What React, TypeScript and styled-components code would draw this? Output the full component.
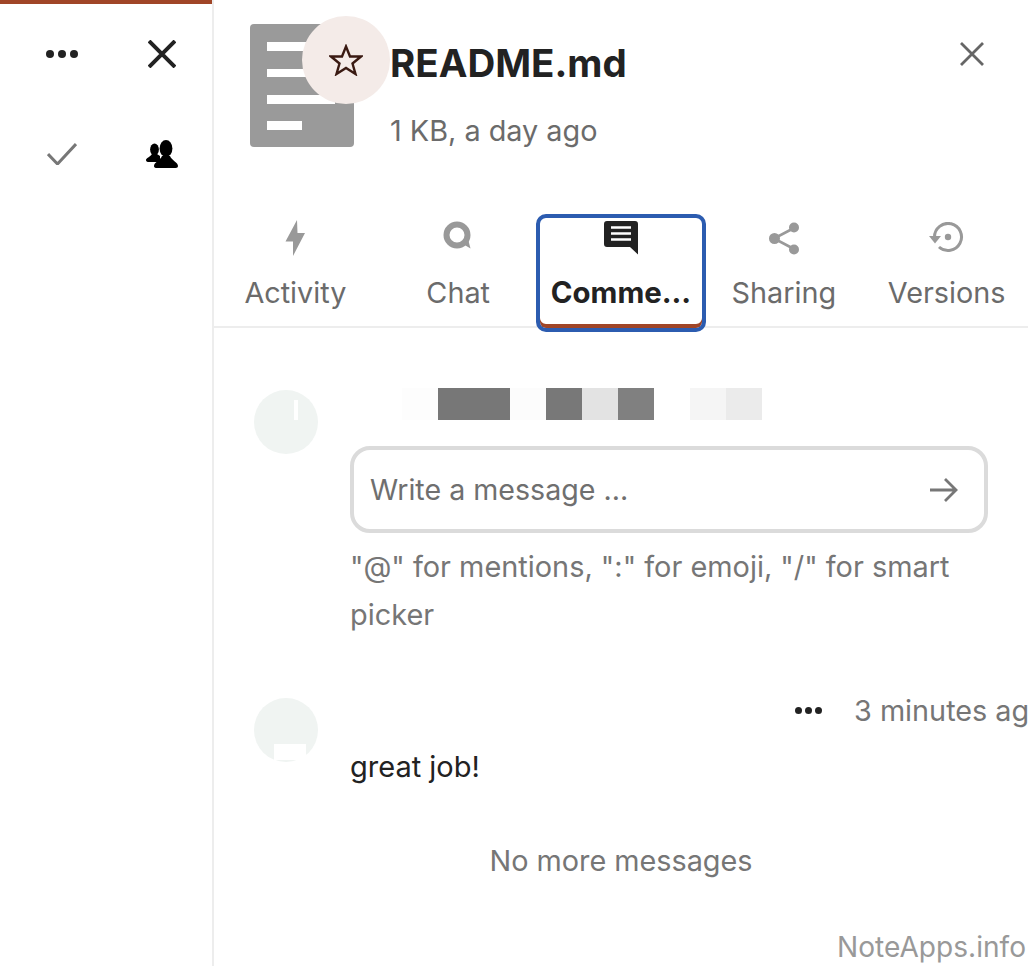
import React from "react";
import styled, { createGlobalStyle } from "styled-components";

const GlobalStyle = createGlobalStyle`
  html, body {
    margin: 0;
    padding: 0;
    background: #fff;
  }
  body {
    font-family: Inter, "Liberation Sans", sans-serif;
    color: #222;
  }
`;

const Page = styled.div`
  position: relative;
  display: flex;
  width: 1028px;
  height: 966px;
  overflow: hidden;
`;

const Sidebar = styled.aside`
  flex: 0 0 212px;
  border-right: 2px solid #ededed;
`;

const TopBar = styled.div`
  height: 4px;
  background: #a04527;
`;

const IconGrid = styled.div`
  display: grid;
  grid-template-columns: 100px 100px;
  grid-auto-rows: 100px;
  padding-left: 12px;
`;

const IconCell = styled.div`
  display: flex;
  align-items: center;
  justify-content: center;
`;

const Main = styled.main`
  flex: 1;
  min-width: 0;
`;

const Header = styled.header`
  position: relative;
  display: flex;
  height: 214px;
  box-sizing: border-box;
  padding: 24px 0 0 36px;
`;

const Thumb = styled.svg`
  display: block;
  flex: 0 0 104px;
  width: 104px;
  height: 123px;
`;

const StarBadge = styled.div`
  position: absolute;
  left: 88px;
  top: 16px;
  width: 88px;
  height: 88px;
  display: flex;
  align-items: center;
  justify-content: center;
  border-radius: 50%;
  background: #f4ebe8;
`;

const HeaderText = styled.div`
  margin-left: 36px;
`;

const Title = styled.h1`
  margin: 14px 0 0;
  font-size: 38.5px;
  line-height: 50px;
  font-weight: 700;
  color: #222;
`;

const Subtitle = styled.p`
  margin: 25px 0 0;
  font-size: 28.8px;
  line-height: 36px;
  color: #6b6b6b;
`;

const CloseButton = styled.div`
  position: absolute;
  right: 44px;
  top: 42px;
  display: flex;
`;

const Tabs = styled.nav`
  display: grid;
  grid-template-columns: repeat(5, 1fr);
  height: 112px;
  border-bottom: 2px solid #ededed;
`;

const Tab = styled.div<{ $active?: boolean }>`
  position: relative;
  display: flex;
  flex-direction: column;
  align-items: center;
  min-width: 0;
  font-size: ${(p) => (p.$active ? 29.4 : 28.8)}px;
  line-height: 36px;
  font-weight: ${(p) => (p.$active ? 700 : 400)};
  color: ${(p) => (p.$active ? "#222" : "#6b6b6b")};

  ${(p) =>
    p.$active &&
    `
    &::after {
      content: "";
      position: absolute;
      left: -4px;
      right: -4px;
      top: 0;
      bottom: -6px;
      border: 4px solid #2c5cb0;
      border-radius: 10px;
      box-shadow: inset 0 -4px 0 #a04527;
    }
  `}
`;

const TabIcon = styled.div`
  display: flex;
  align-items: center;
  justify-content: center;
  height: 48px;
`;

const TabLabel = styled.span`
  margin-top: 13px;
  white-space: nowrap;
`;

const Comments = styled.section`
  padding: 60px 40px 0;
`;

const CommentRow = styled.div<{ $gap?: number }>`
  display: flex;
  gap: 32px;
  margin-top: ${(p) => p.$gap ?? 0}px;
`;

const Avatar = styled.div`
  position: relative;
  flex: 0 0 64px;
  width: 64px;
  height: 64px;
  margin-top: 2px;
  border-radius: 50%;
  background: #f0f4f2;
`;

const AvatarMark = styled.span<{ $variant: "tick" | "block" }>`
  position: absolute;
  background: #fff;
  ${(p) =>
    p.$variant === "tick"
      ? "left: 40px; top: 10px; width: 4px; height: 20px;"
      : "left: 20px; top: 46px; width: 32px; height: 16px;"}
`;

const CommentBody = styled.div`
  flex: 1;
  min-width: 0;
`;

const NameStrip = styled.div`
  display: flex;
  height: 32px;
  padding-left: 52px;
`;

const Pixel = styled.span<{ $shade: string }>`
  width: 36px;
  background: ${(p) => p.$shade};
`;

const MessageBox = styled.div`
  display: flex;
  align-items: center;
  justify-content: space-between;
  box-sizing: border-box;
  width: 638px;
  height: 87px;
  margin-top: 26px;
  padding: 0 26px 0 16px;
  border: 4px solid #dbdbdb;
  border-radius: 20px;
  font-size: 28.6px;
  color: #6f6f6f;
`;

const Hint = styled.p`
  margin: 10px 0 0;
  width: 638px;
  font-size: 28.9px;
  line-height: 48px;
  color: #767676;
`;

const MetaRow = styled.div`
  display: flex;
  align-items: center;
  height: 28px;
  padding-left: 445px;
  white-space: nowrap;
  font-size: 28.8px;
  color: #767676;

  & svg {
    flex: none;
  }
`;

const MetaTime = styled.span`
  margin-left: 32px;
`;

const Message = styled.p`
  margin: 23px 0 0;
  font-size: 29px;
  line-height: 40px;
  color: #222;
`;

const NoMore = styled.p`
  margin: 54px 0 0;
  text-align: center;
  font-size: 28.8px;
  line-height: 40px;
  color: #767676;
`;

const Watermark = styled.div`
  position: absolute;
  right: 2px;
  bottom: 1px;
  font-size: 28.1px;
  line-height: 36px;
  color: #999;
`;

const Dots = ({ r = 4, gap = 12, fill = "#222" }: { r?: number; gap?: number; fill?: string }) => (
  <svg width={gap * 2 + r * 2} height={r * 2} viewBox={`0 0 ${gap * 2 + r * 2} ${r * 2}`}>
    <circle cx={r} cy={r} r={r} fill={fill} />
    <circle cx={r + gap} cy={r} r={r} fill={fill} />
    <circle cx={r + gap * 2} cy={r} r={r} fill={fill} />
  </svg>
);

const Cross = ({ size, stroke, color }: { size: number; stroke: number; color: string }) => (
  <svg width={size} height={size} viewBox={`0 0 ${size} ${size}`}>
    <path d={`M1 1L${size - 1} ${size - 1}M${size - 1} 1L1 ${size - 1}`} stroke={color} strokeWidth={stroke} fill="none" />
  </svg>
);

const tabs = [
  {
    label: "Activity",
    icon: (
      <svg width="20" height="36" viewBox="0 0 20 36">
        <path d="M12 0L0.5 21.5H8L8 36L20 13H12.5Z" fill="#999" />
      </svg>
    ),
  },
  {
    label: "Chat",
    icon: (
      <svg width="30" height="30" viewBox="0 0 30 30" style={{ marginTop: -4 }}>
        <circle cx="14" cy="14" r="10.5" fill="none" stroke="#999" strokeWidth="6" />
        <path d="M20 23L27.5 27.5L25 18Z" fill="#999" />
      </svg>
    ),
  },
  {
    label: "Comme...",
    active: true,
    icon: (
      <svg width="34" height="34" viewBox="0 0 34 34">
        <path
          d="M3 0H31A3 3 0 0 1 34 3V33.5L26 26H3A3 3 0 0 1 0 23V3A3 3 0 0 1 3 0Z"
          fill="#222"
        />
        <path d="M7 6.5H27M7 12.5H27M7 18.5H27" stroke="#fff" strokeWidth="2.6" />
      </svg>
    ),
  },
  {
    label: "Sharing",
    icon: (
      <svg width="30" height="33" viewBox="0 0 30 33">
        <path d="M25 6L5 16.5L25 27" fill="none" stroke="#999" strokeWidth="2.6" />
        <circle cx="5.5" cy="16.5" r="5.5" fill="#999" />
        <circle cx="25" cy="5.5" r="5" fill="#999" />
        <circle cx="25" cy="27.5" r="5" fill="#999" />
      </svg>
    ),
  },
  {
    label: "Versions",
    icon: (
      <svg width="36" height="32" viewBox="0 0 36 32">
        <path
          d="M5.5 15A13.5 13.5 0 1 1 10 25"
          fill="none"
          stroke="#999"
          strokeWidth="3"
        />
        <path d="M0 14H12L6 21.5Z" fill="#999" />
        <circle cx="19" cy="15" r="3.2" fill="#999" />
      </svg>
    ),
  },
];

const namePixels = ["#fdfdfd", "#777", "#777", "#fcfcfc", "#787878", "#e3e3e3", "#808080", "#fff", "#f5f5f5", "#ebebeb"];

export default function App() {
  return (
    <Page>
      <GlobalStyle />
      <Sidebar>
        <TopBar />
        <IconGrid>
          <IconCell>
            <Dots />
          </IconCell>
          <IconCell>
            <Cross size={28} stroke={4} color="#222" />
          </IconCell>
          <IconCell>
            <svg width="30" height="22" viewBox="0 0 30 22">
              <path d="M1 11L10.5 21L29 1" fill="none" stroke="#777" strokeWidth="3" />
            </svg>
          </IconCell>
          <IconCell>
            <svg width="32" height="28" viewBox="0 0 32 28">
              <ellipse cx="8.5" cy="9.5" rx="4.4" ry="6" />
              <path d="M0 20C0 18 4 17 6 14H11L14 16V22H3C1 22 0 21.5 0 20Z" />
              <ellipse cx="20" cy="8.5" rx="6.4" ry="8.5" />
              <path d="M8 26C8 22 14 21 16 16H24C26 21 32 22 32 26C32 28 30 28 28 28H11C9 28 8 27.5 8 26Z" />
            </svg>
          </IconCell>
        </IconGrid>
      </Sidebar>
      <Main>
        <Header>
          <Thumb viewBox="0 0 104 123">
            <rect width="104" height="123" rx="4" fill="#9a9a9a" />
            <path d="M17 18H85V27H17ZM17 45H85V53H17ZM17 71H85V80H17ZM17 97H52V106H17Z" fill="#fff" />
          </Thumb>
          <StarBadge>
            <svg width="34" height="32" viewBox="0 0 34 32">
              <path
                d="M17 2.5L21 12.5H32L23.5 19.5L26.5 30L17 24L7.5 30L10.5 19.5L2 12.5H13Z"
                fill="none"
                stroke="#3a1a12"
                strokeWidth="2.4"
              />
            </svg>
          </StarBadge>
          <HeaderText>
            <Title>README.md</Title>
            <Subtitle>1 KB, a day ago</Subtitle>
          </HeaderText>
          <CloseButton>
            <Cross size={24} stroke={2.8} color="#666" />
          </CloseButton>
        </Header>
        <Tabs>
          {tabs.map((tab) => (
            <Tab key={tab.label} $active={tab.active}>
              <TabIcon>{tab.icon}</TabIcon>
              <TabLabel>{tab.label}</TabLabel>
            </Tab>
          ))}
        </Tabs>
        <Comments>
          <CommentRow>
            <Avatar>
              <AvatarMark $variant="tick" />
            </Avatar>
            <CommentBody>
              <NameStrip>
                {namePixels.map((shade, i) => (
                  <Pixel key={i} $shade={shade} />
                ))}
              </NameStrip>
              <MessageBox>
                Write a message ...
                <svg width="28" height="26" viewBox="0 0 28 26">
                  <path d="M0 13H26M15 2L26 13L15 24" fill="none" stroke="#777" strokeWidth="2.8" />
                </svg>
              </MessageBox>
              <Hint>"@" for mentions, ":" for emoji, "/" for smart picker</Hint>
            </CommentBody>
          </CommentRow>
          <CommentRow $gap={57}>
            <Avatar>
              <AvatarMark $variant="block" />
            </Avatar>
            <CommentBody>
              <MetaRow>
                <Dots r={3.5} gap={10} />
                <MetaTime>3 minutes ago</MetaTime>
              </MetaRow>
              <Message>great job!</Message>
            </CommentBody>
          </CommentRow>
          <NoMore>No more messages</NoMore>
        </Comments>
      </Main>
      <Watermark>NoteApps.info</Watermark>
    </Page>
  );
}
